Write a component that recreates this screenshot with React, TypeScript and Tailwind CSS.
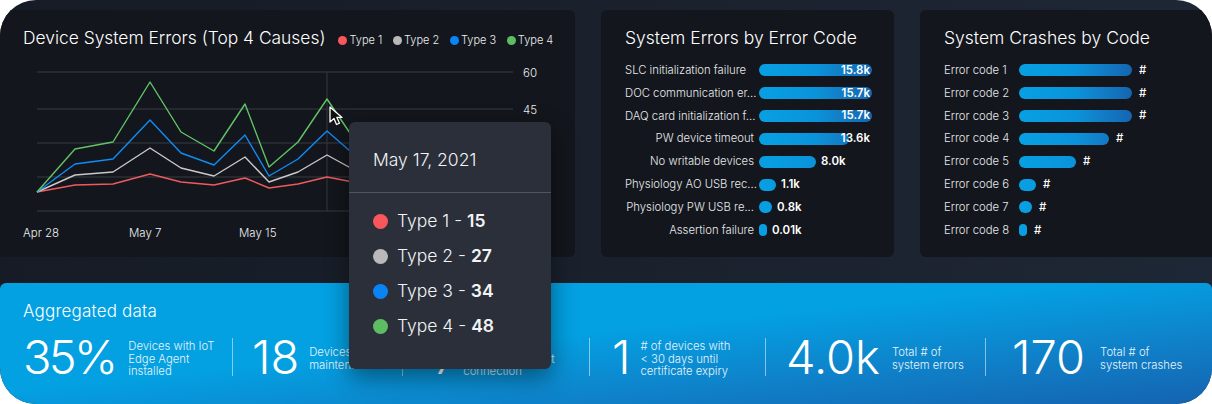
const grid = [72, 109, 143, 177, 211];
const xs = [37, 75, 113, 150, 181, 214, 245, 269, 298, 327, 358, 390, 420, 450, 480, 513];

const series = [
  { color: "#f05a5c", ys: [192, 185, 184, 174, 182, 185, 178, 188, 184, 177, 183, 180, 186, 182, 185, 184] },
  { color: "#c9c9c9", ys: [192, 175, 172, 148, 168, 176, 157, 182, 172, 155, 172, 165, 176, 168, 174, 172] },
  { color: "#0f8cf5", ys: [192, 164, 159, 120, 153, 165, 135, 176, 159, 131, 158, 150, 166, 155, 164, 160] },
  { color: "#62c466", ys: [192, 149, 142, 82, 132, 151, 104, 167, 142, 99, 145, 130, 158, 140, 150, 146] },
];

const legend = [
  { name: "Type 1", dot: "bg-[#f9575b]", value: 15 },
  { name: "Type 2", dot: "bg-[#b9b9b9]", value: 27 },
  { name: "Type 3", dot: "bg-[#0a84f5]", value: 34 },
  { name: "Type 4", dot: "bg-[#5dbd63]", value: 48 },
];

const errorCodes = [
  { label: "SLC initialization failure", width: 113, value: "15.8k", inside: true, align: "text-left" },
  { label: "DOC communication er...", width: 113, value: "15.7k", inside: true, align: "text-right" },
  { label: "DAQ card initialization f...", width: 113, value: "15.7k", inside: true, align: "text-right" },
  { label: "PW device timeout", width: 90, value: "13.6k", inside: true, align: "text-right" },
  { label: "No writable devices", width: 57, value: "8.0k", align: "text-right" },
  { label: "Physiology AO USB rec...", width: 17, value: "1.1k", align: "text-right" },
  { label: "Physiology PW USB re...", width: 13, value: "0.8k", align: "text-right" },
  { label: "Assertion failure", width: 8, value: "0.01k", align: "text-right" },
];

const crashCodes = [
  { label: "Error code 1", width: 113 },
  { label: "Error code 2", width: 113 },
  { label: "Error code 3", width: 113 },
  { label: "Error code 4", width: 90 },
  { label: "Error code 5", width: 57 },
  { label: "Error code 6", width: 17 },
  { label: "Error code 7", width: 13 },
  { label: "Error code 8", width: 8 },
];

const stats = [
  { value: "35%", lines: ["Devices with IoT", "Edge Agent", "installed"], box: "w-[232px] pl-[23px]", gap: "gap-[13px]", tight: "tracking-[-2.7px]" },
  { value: "18", lines: ["Devices in", "maintenance"], box: "w-[170px] pl-[19px]", gap: "gap-[10px]", tight: "" },
  { value: "7", lines: ["Devices with no", "contact since last", "connection"], box: "w-[187px] pl-[30px]", gap: "gap-[4px]", tight: "" },
  { value: "1", lines: ["# of devices with", "< 30 days until", "certificate expiry"], box: "w-[176px] pl-[22px]", gap: "gap-[10px]", tight: "" },
  { value: "4.0k", lines: ["Total # of", "system errors"], box: "w-[220px] pl-[20px]", gap: "gap-[12px]", tight: "" },
  { value: "170", lines: ["Total # of", "system crashes"], box: "w-[226px] pl-[26px]", gap: "gap-[15px]", tight: "" },
];

const Bar = ({ width }: { width: number }) => (
  <div className="h-3 shrink-0 overflow-hidden rounded-full" style={{ width }}>
    <div className="h-full w-[113px] bg-linear-to-r from-[#07a0e3] via-[#0a93da] to-[#1565b0]" />
  </div>
);

const App = () => {
  return (
    <div className="h-[404px] w-[1212px] overflow-hidden bg-white font-['Inter',sans-serif] text-white">
      <div className="relative h-full overflow-hidden rounded-[36px] bg-linear-to-r from-[#161b25] to-[#1e2735]">
        <div className="flex gap-[26px] pt-[10px]">
          <div className="h-[247px] w-[575px] shrink-0 rounded-r-md bg-[#13161c]">
            <div className="flex items-center pl-[23px] pt-[17px]">
              <h2 className="text-[17.4px] font-light leading-[22px] whitespace-nowrap">
                Device System Errors (Top 4 Causes)
              </h2>
              <div className="ml-[13px] flex items-center gap-[10.7px] pt-1">
                {legend.map((item) => (
                  <div key={item.name} className="flex items-center gap-[2px] whitespace-nowrap">
                    <span className={`h-[9px] w-[9px] rounded-full ${item.dot}`} />
                    <span className="text-[11px] font-light leading-4 text-[#eceef0]">{item.name}</span>
                  </div>
                ))}
              </div>
            </div>
            <svg width="575" height="198" viewBox="0 49 575 198" className="block" fill="none">
              {grid.map((y) => (
                <line key={y} x1="37" x2="513" y1={y} y2={y} stroke="#2b2f36" strokeWidth="1.3" />
              ))}
              <line x1="327" x2="327" y1="72" y2="211" stroke="#2f333a" strokeWidth="1.3" />
              {series.map((s) => (
                <polyline
                  key={s.color}
                  points={s.ys.map((y, i) => `${xs[i]},${y}`).join(" ")}
                  stroke={s.color}
                  strokeWidth="1.4"
                  strokeLinejoin="round"
                />
              ))}
              <g fill="#eef0f2" fontSize="11.5" fontWeight="300">
                <text x="523" y="77">60</text>
                <text x="523" y="114">45</text>
                <text x="523" y="148">30</text>
                <text x="523" y="182">15</text>
                <text x="523" y="216">0</text>
                <text x="23" y="237">Apr 28</text>
                <text x="129" y="237">May 7</text>
                <text x="239" y="237">May 15</text>
                <text x="349" y="237">May 23</text>
              </g>
            </svg>
          </div>

          <div className="h-[247px] w-[293px] shrink-0 rounded-md bg-[#13161c] pl-6 pt-[17px]">
            <h2 className="text-[17.5px] font-light leading-[22px] whitespace-nowrap">System Errors by Error Code</h2>
            <div className="mt-[10px] flex flex-col">
              {errorCodes.map((row) => (
                <div key={row.label} className="relative flex h-[22.85px] items-center">
                  <span className={`w-[129px] shrink-0 text-[11.3px] font-light whitespace-nowrap text-[#e8eaec] ${row.align}`}>
                    {row.label}
                  </span>
                  <div className="ml-[5px] flex items-center">
                    <Bar width={row.width} />
                    <span
                      className={
                        row.inside
                          ? "absolute right-[24px] text-[11.5px] font-semibold"
                          : "ml-[5px] text-[11.5px] font-semibold"
                      }
                    >
                      {row.value}
                    </span>
                  </div>
                </div>
              ))}
            </div>
          </div>

          <div className="h-[247px] w-[292px] shrink-0 rounded-l-md bg-[#13161c] pl-6 pt-[17px]">
            <h2 className="text-[17.5px] font-light leading-[22px] whitespace-nowrap">System Crashes by Code</h2>
            <div className="mt-[10px] flex flex-col">
              {crashCodes.map((row) => (
                <div key={row.label} className="flex h-[22.85px] items-center">
                  <span className="w-[75px] shrink-0 text-[11.3px] font-light text-[#e8eaec]">{row.label}</span>
                  <Bar width={row.width} />
                  <span className="ml-[7px] text-[11.5px] font-medium">#</span>
                </div>
              ))}
            </div>
          </div>
        </div>

        <div className="mt-[26px] h-[121px] rounded-t-md bg-linear-to-br from-[#03a0e2] from-45% to-[#1463b0]">
          <p className="pl-[23px] pt-[17px] text-[17px] font-light leading-[22px] tracking-[0.2px]">Aggregated data</p>
          <div className="mt-[16px] flex items-center">
            {stats.map((stat, i) => (
              <div
                key={stat.value}
                className={`flex h-[38px] shrink-0 items-center ${stat.gap} ${stat.box} ${i > 0 ? "border-l border-white/50" : ""}`}
              >
                <span className={`-mt-[2px] text-[47px] font-light leading-none ${stat.tight}`}>{stat.value}</span>
                <span className="mt-[4px] text-[11.3px] font-light leading-[12.7px] whitespace-nowrap text-[#e6f4fb]">
                  {stat.lines.map((line) => (
                    <span key={line} className="block">
                      {line}
                    </span>
                  ))}
                </span>
              </div>
            ))}
          </div>
        </div>

        <svg width="15" height="20" viewBox="0 0 15 20" className="absolute left-[329px] top-[106px]">
          <path d="M1 1v15l4-3.5 2.5 6 3-1.3-2.6-5.8H13L1 1z" fill="#111" stroke="#fff" strokeWidth="1.3" strokeLinejoin="round" />
        </svg>

        <div className="absolute left-[349px] top-[122px] h-[247px] w-[202px] rounded-md bg-[#2a2f3a] shadow-[0_8px_24px_rgba(0,0,0,0.45)]">
          <p className="pl-6 pt-[26px] text-[17.5px] font-light leading-6 text-[#f2f3f5]">May 17, 2021</p>
          <div className="mt-5 border-t border-[#51555e]" />
          <div className="mt-[11px] flex flex-col pl-6">
            {legend.map((item) => (
              <div key={item.name} className="flex h-[35px] items-center gap-[9px]">
                <span className={`h-[15px] w-[15px] rounded-full ${item.dot}`} />
                <span className="text-[17.5px] font-light text-[#f2f3f5]">
                  {item.name} - <b className="font-semibold">{item.value}</b>
                </span>
              </div>
            ))}
          </div>
        </div>
      </div>
    </div>
  );
};

export default App;
